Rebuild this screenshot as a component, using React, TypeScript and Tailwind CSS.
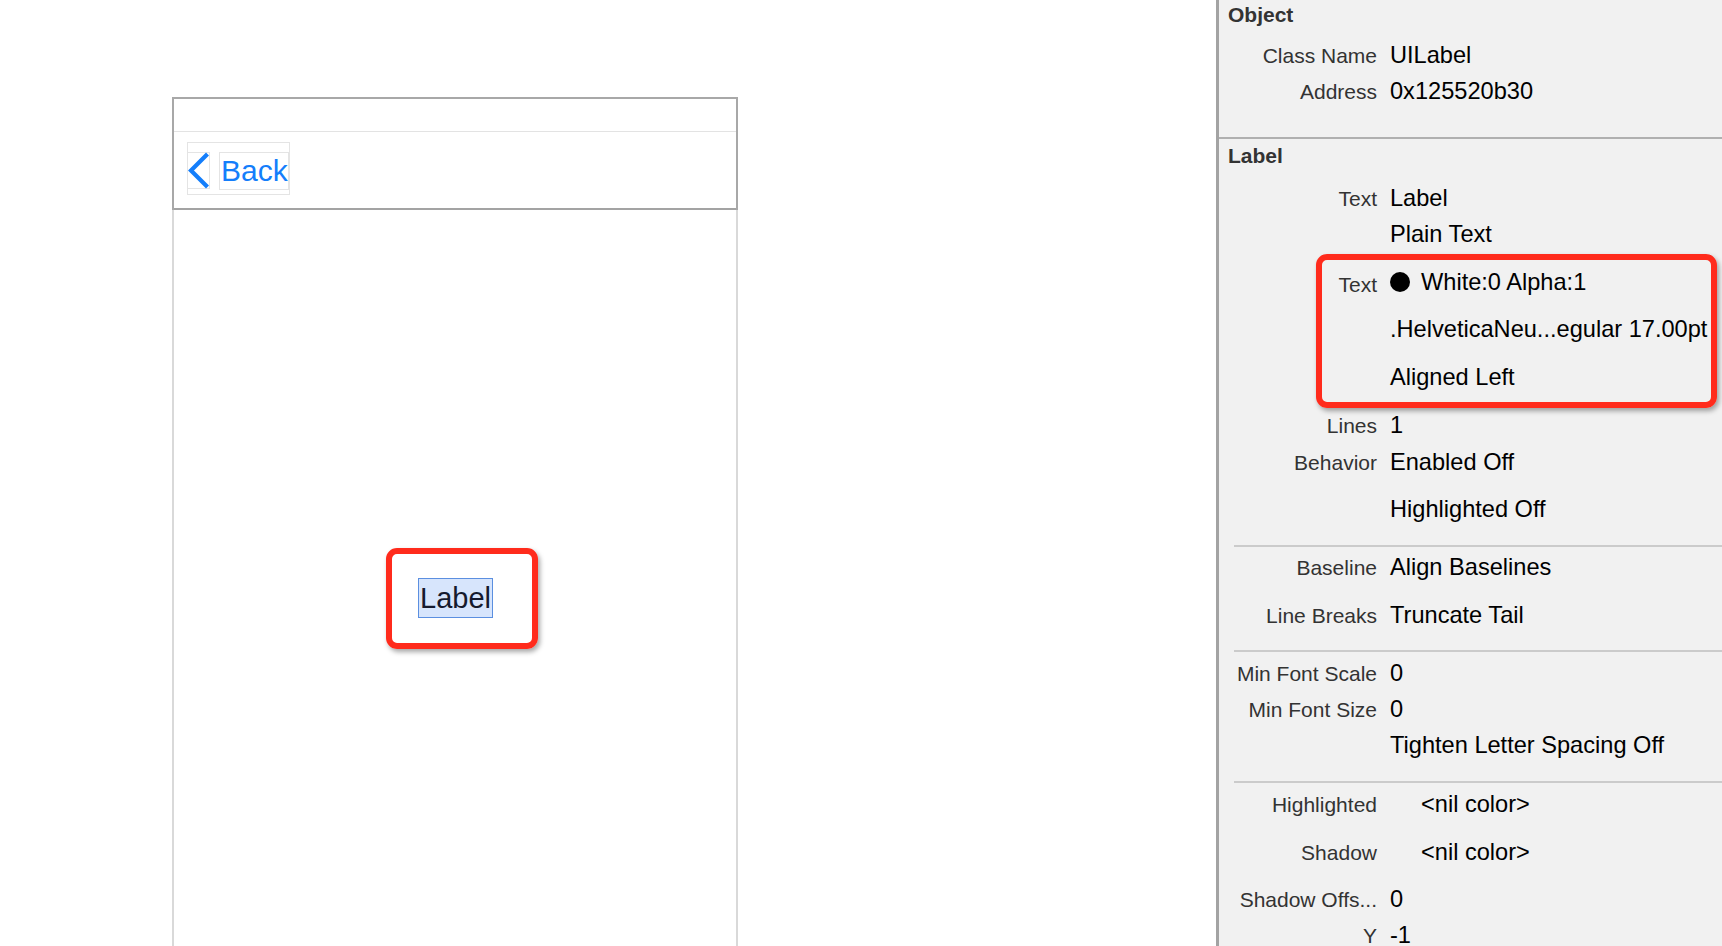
import React from "react";

const font = { fontFamily: '"Liberation Sans", Arial, sans-serif' };

function Row({
  label,
  children,
  h,
  mt,
}: {
  label?: string;
  children?: React.ReactNode;
  h: string;
  mt?: string;
}) {
  return (
    <div className={`flex shrink-0 items-baseline ${h} ${mt ?? ""}`}>
      <div className="w-[158px] shrink-0 text-right text-[21px] text-[#333333] whitespace-nowrap">
        {label ?? ""}
      </div>
      <div className="ml-[13px] text-[23.6px] text-black whitespace-nowrap flex items-center">
        {children}
      </div>
    </div>
  );
}

export default function App() {
  return (
    <div
      className="w-[1722px] h-[946px] flex overflow-hidden bg-white"
      style={font}
    >
      {/* Canvas */}
      <div className="relative w-[1216px] shrink-0 pl-[172px] pt-[97px]">
        <div className="w-[566px] h-[849px] flex flex-col">
          <div className="shrink-0 border-x-2 border-t-2 border-[#a8a8a8]">
            <div className="h-[33px] border-b border-[#e3e3e3]" />
            <div className="h-[78px] border-b-2 border-[#a3a3a3] pl-[13px] pt-[10px]">
              <div className="w-[103px] h-[53px] border border-[#e4e4e4] flex items-start">
                <div className="-ml-px mt-[9px] w-[23px] h-[37px] border border-[#e4e4e4] flex items-center justify-center">
                  <svg width="21" height="35" viewBox="0 0 21 35" className="overflow-visible">
                    <path
                      d="M19.5 1 L3 17.5 L19.5 34"
                      fill="none"
                      stroke="#147efb"
                      strokeWidth="4.2"
                      strokeLinecap="butt"
                      strokeLinejoin="miter"
                    />
                  </svg>
                </div>
                <div className="ml-[9px] mt-[9px] w-[71px] h-[38px] border border-[#e4e4e4] pl-[1px] text-[30px] leading-[36px] text-[#147efb]">
                  Back
                </div>
              </div>
            </div>
          </div>
          <div className="flex-1 border-x-2 border-[#d9d9d9] flex flex-col items-center">
            <div className="mt-[368px] ml-[1px] w-[75px] h-[40px] bg-[#d7e5fc] border border-[#5b8fe0] pl-[1px] text-[29px] leading-[38px] text-[#151a2e]">
              Label
            </div>
          </div>
        </div>
        {/* annotation */}
        <div className="absolute left-[386px] top-[548px] w-[152px] h-[101px] rounded-[11px] border-[6px] border-[#ff2b1c] shadow-[2px_3px_5px_rgba(0,0,0,0.35)]" />
      </div>

      {/* Inspector */}
      <div className="relative flex-1 overflow-hidden border-l-[3px] border-[#a3a3a3] bg-[#f1f1f1] flex flex-col">
        <div className="shrink-0 h-[30px] leading-[30px] pl-[9px] text-[21px] font-bold text-[#333333]">
          Object
        </div>
        <Row label="Class Name" h="h-[36px] leading-[36px]" mt="mt-[7px]">
          UILabel
        </Row>
        <Row label="Address" h="h-[36px] leading-[36px]">
          0x125520b30
        </Row>
        <div className="shrink-0 mt-[28px] h-[2px] bg-[#b0b0b0]" />

        <div className="shrink-0 mt-[2px] h-[30px] leading-[30px] pl-[9px] text-[21px] font-bold text-[#333333]">
          Label
        </div>
        <Row label="Text" h="h-[36px] leading-[36px]" mt="mt-[9px]">
          Label
        </Row>
        <Row h="h-[36px] leading-[36px]">Plain Text</Row>
        <Row label="Text" h="h-[48px] leading-[48px]" mt="mt-[6px]">
          <span className="inline-block w-[20px] h-[20px] rounded-full bg-black mr-[11px]" />
          White:0 Alpha:1
        </Row>
        <Row h="h-[47px] leading-[47px]">.HelveticaNeu...egular 17.00pt</Row>
        <Row h="h-[48px] leading-[48px]">Aligned Left</Row>
        <Row label="Lines" h="h-[36px] leading-[36px]" mt="mt-[6px]">
          1
        </Row>
        <Row label="Behavior" h="h-[36px] leading-[36px]" mt="mt-[1px]">
          Enabled Off
        </Row>
        <Row h="h-[48px] leading-[48px]" mt="mt-[5px]">
          Highlighted Off
        </Row>
        <div className="shrink-0 mt-[12px] ml-[15px] h-[2px] bg-[#cbcbcb]" />
        <Row label="Baseline" h="h-[36px] leading-[36px]" mt="mt-[2px]">
          Align Baselines
        </Row>
        <Row label="Line Breaks" h="h-[36px] leading-[36px]" mt="mt-[12px]">
          Truncate Tail
        </Row>
        <div className="shrink-0 mt-[17px] ml-[15px] h-[2px] bg-[#cbcbcb]" />
        <Row label="Min Font Scale" h="h-[35px] leading-[35px]" mt="mt-[4px]">
          0
        </Row>
        <Row label="Min Font Size" h="h-[36px] leading-[36px]">
          0
        </Row>
        <Row h="h-[36px] leading-[36px]">Tighten Letter Spacing Off</Row>
        <div className="shrink-0 mt-[18px] ml-[15px] h-[2px] bg-[#cbcbcb]" />
        <Row label="Highlighted" h="h-[36px] leading-[36px]" mt="mt-[3px]">
          <span className="ml-[31px]">&lt;nil color&gt;</span>
        </Row>
        <Row label="Shadow" h="h-[36px] leading-[36px]" mt="mt-[12px]">
          <span className="ml-[31px]">&lt;nil color&gt;</span>
        </Row>
        <Row label="Shadow Offs..." h="h-[36px] leading-[36px]" mt="mt-[11px]">
          0
        </Row>
        <Row label="Y" h="h-[36px] leading-[36px]">
          -1
        </Row>

        {/* annotation */}
        <div className="absolute left-[97px] top-[254px] w-[401px] h-[154px] rounded-[11px] border-[6px] border-[#ff2b1c] shadow-[2px_3px_5px_rgba(0,0,0,0.35)]" />
      </div>
    </div>
  );
}
